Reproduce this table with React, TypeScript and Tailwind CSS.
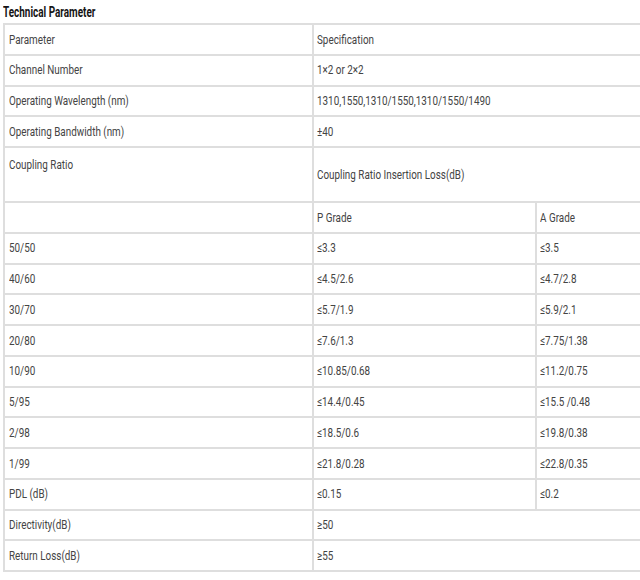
import React from "react";

const F = { fontFamily: 'Roboto, "Liberation Sans", Arial, sans-serif' };

type Row = { a: string; b: string; c?: string; tall?: boolean };

const rows: Row[] = [
  { a: "Parameter", b: "Specification" },
  { a: "Channel Number", b: "1×2 or 2×2" },
  { a: "Operating Wavelength (nm)", b: "1310,1550,1310/1550,1310/1550/1490" },
  { a: "Operating Bandwidth (nm)", b: "±40" },
  { a: "Coupling Ratio", b: "Coupling Ratio Insertion Loss(dB)", tall: true },
  { a: "", b: "P Grade", c: "A Grade" },
  { a: "50/50", b: "≤3.3", c: "≤3.5" },
  { a: "40/60", b: "≤4.5/2.6", c: "≤4.7/2.8" },
  { a: "30/70", b: "≤5.7/1.9", c: "≤5.9/2.1" },
  { a: "20/80", b: "≤7.6/1.3", c: "≤7.75/1.38" },
  { a: "10/90", b: "≤10.85/0.68", c: "≤11.2/0.75" },
  { a: "5/95", b: "≤14.4/0.45", c: "≤15.5 /0.48" },
  { a: "2/98", b: "≤18.5/0.6", c: "≤19.8/0.38" },
  { a: "1/99", b: "≤21.8/0.28", c: "≤22.8/0.35" },
  { a: "PDL (dB)", b: "≤0.15", c: "≤0.2" },
  { a: "Directivity(dB)", b: "≥50" },
  { a: "Return Loss(dB)", b: "≥55" },
];

function T({ children }: { children: React.ReactNode }) {
  return (
    <span className="inline-block origin-left scale-x-[0.76] whitespace-nowrap">{children}</span>
  );
}

export default function App() {
  return (
    <div className="w-[640px] h-[580px] overflow-hidden bg-white text-[#444]" style={F}>
      <div className="pl-[3px] pt-[3px] h-[23px] text-[14px] font-bold text-[#151515] leading-[18px]">
        <span className="inline-block origin-left scale-x-[0.71] whitespace-nowrap">Technical Parameter</span>
      </div>
      <div className="ml-[3px] w-[680px] border-t-2 border-l-2 border-[#dedede] text-[13px]">
        {rows.map((r, i) => (
          <div
            key={i}
            className={`flex border-b-2 border-[#dedede] ${r.tall ? "h-[55px]" : "h-[30.75px]"}`}
          >
            <div
              className={`w-[309px] shrink-0 border-r-2 border-[#dedede] pl-[4px] flex ${r.tall ? "items-start pt-[7px]" : "items-center"}`}
            >
              <T>{r.a}</T>
            </div>
            {r.c !== undefined ? (
              <>
                <div className="w-[223px] shrink-0 border-r-2 border-[#dedede] pl-[3px] flex items-center">
                  <T>{r.b}</T>
                </div>
                <div className="flex-1 pl-[3px] flex items-center">
                  <T>{r.c}</T>
                </div>
              </>
            ) : (
              <div className="flex-1 pl-[3px] flex items-center">
                <T>{r.b}</T>
              </div>
            )}
          </div>
        ))}
      </div>
    </div>
  );
}
